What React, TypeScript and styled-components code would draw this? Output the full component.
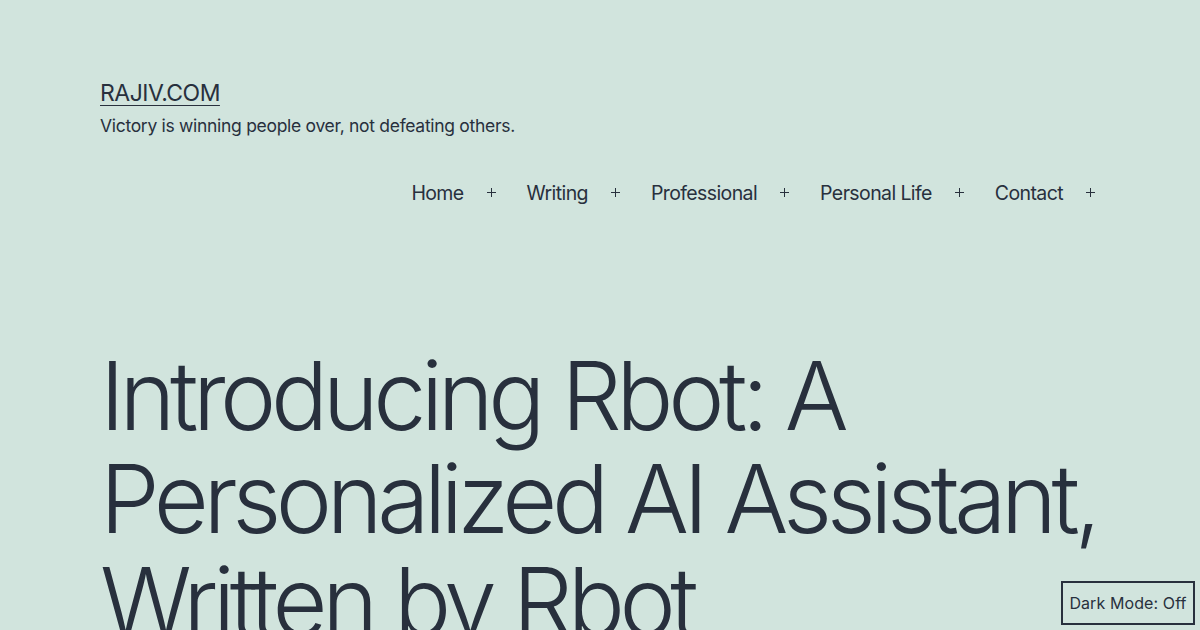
import styled, { createGlobalStyle } from "styled-components";

const GlobalStyle = createGlobalStyle`
  html, body {
    margin: 0;
    padding: 0;
    background: #d1e4dd;
    color: #28303d;
    font-family: Inter, "Noto Sans", sans-serif;
  }
`;

const Page = styled.div`
  width: 1200px;
  height: 630px;
  overflow: hidden;
  position: relative;
  background: #d1e4dd;
  box-sizing: border-box;
  padding: 78px 100px 0;
`;

const Branding = styled.div`
  display: flex;
  flex-direction: column;
  gap: 5px;
`;

const SiteTitle = styled.a`
  font-size: 23px;
  line-height: 30px;
  letter-spacing: -0.5px;
  text-transform: uppercase;
  color: #28303d;
  text-decoration: underline;
  text-decoration-thickness: 1px;
  text-underline-offset: 4px;
  align-self: flex-start;
`;

const Tagline = styled.p`
  margin: 0;
  font-size: 17.5px;
  line-height: 26px;
  letter-spacing: -0.3px;
`;

const Nav = styled.nav`
  display: flex;
  justify-content: flex-end;
  margin-top: 39px;
  margin-right: 5px;
`;

const NavItem = styled.div`
  display: flex;
  align-items: center;
  & + & {
    margin-left: 31px;
  }
`;

const NavLink = styled.a`
  font-size: 19.5px;
  line-height: 30px;
  color: #28303d;
  letter-spacing: -0.6px;
`;

const Plus = styled.svg`
  margin-left: 23px;
  width: 9px;
  height: 9px;
  margin-top: -2px;
`;

const Title = styled.h1`
  margin: 136px 0 0;
  width: 1040px;
  font-size: 95px;
  font-weight: 300;
  line-height: 103px;
  letter-spacing: -5.4px;
  white-space: nowrap;
`;

const DarkToggle = styled.button`
  position: absolute;
  right: 5px;
  bottom: 5px;
  width: 134px;
  height: 44px;
  border: 2px solid #28303d;
  background: #d1e4dd;
  color: #28303d;
  font-family: Inter, "Noto Sans", sans-serif;
  font-size: 16px;
  letter-spacing: 0.1px;
  padding: 0;
`;

const items = ["Home", "Writing", "Professional", "Personal Life", "Contact"];

export default function App() {
  return (
    <Page>
      <GlobalStyle />
      <Branding>
        <SiteTitle>RAJIV.COM</SiteTitle>
        <Tagline>Victory is winning people over, not defeating others.</Tagline>
      </Branding>
      <Nav>
        {items.map((i) => (
          <NavItem key={i}>
            <NavLink>{i}</NavLink>
            <Plus viewBox="0 0 9 9">
              <path d="M4.5 0v9M0 4.5h9" stroke="#28303d" strokeWidth="1" fill="none" />
            </Plus>
          </NavItem>
        ))}
      </Nav>
      <Title>
        Introducing Rbot: A<br />
        Personalized AI Assistant,<br />
        Written by Rbot
      </Title>
      <DarkToggle>Dark Mode: Off</DarkToggle>
    </Page>
  );
}
